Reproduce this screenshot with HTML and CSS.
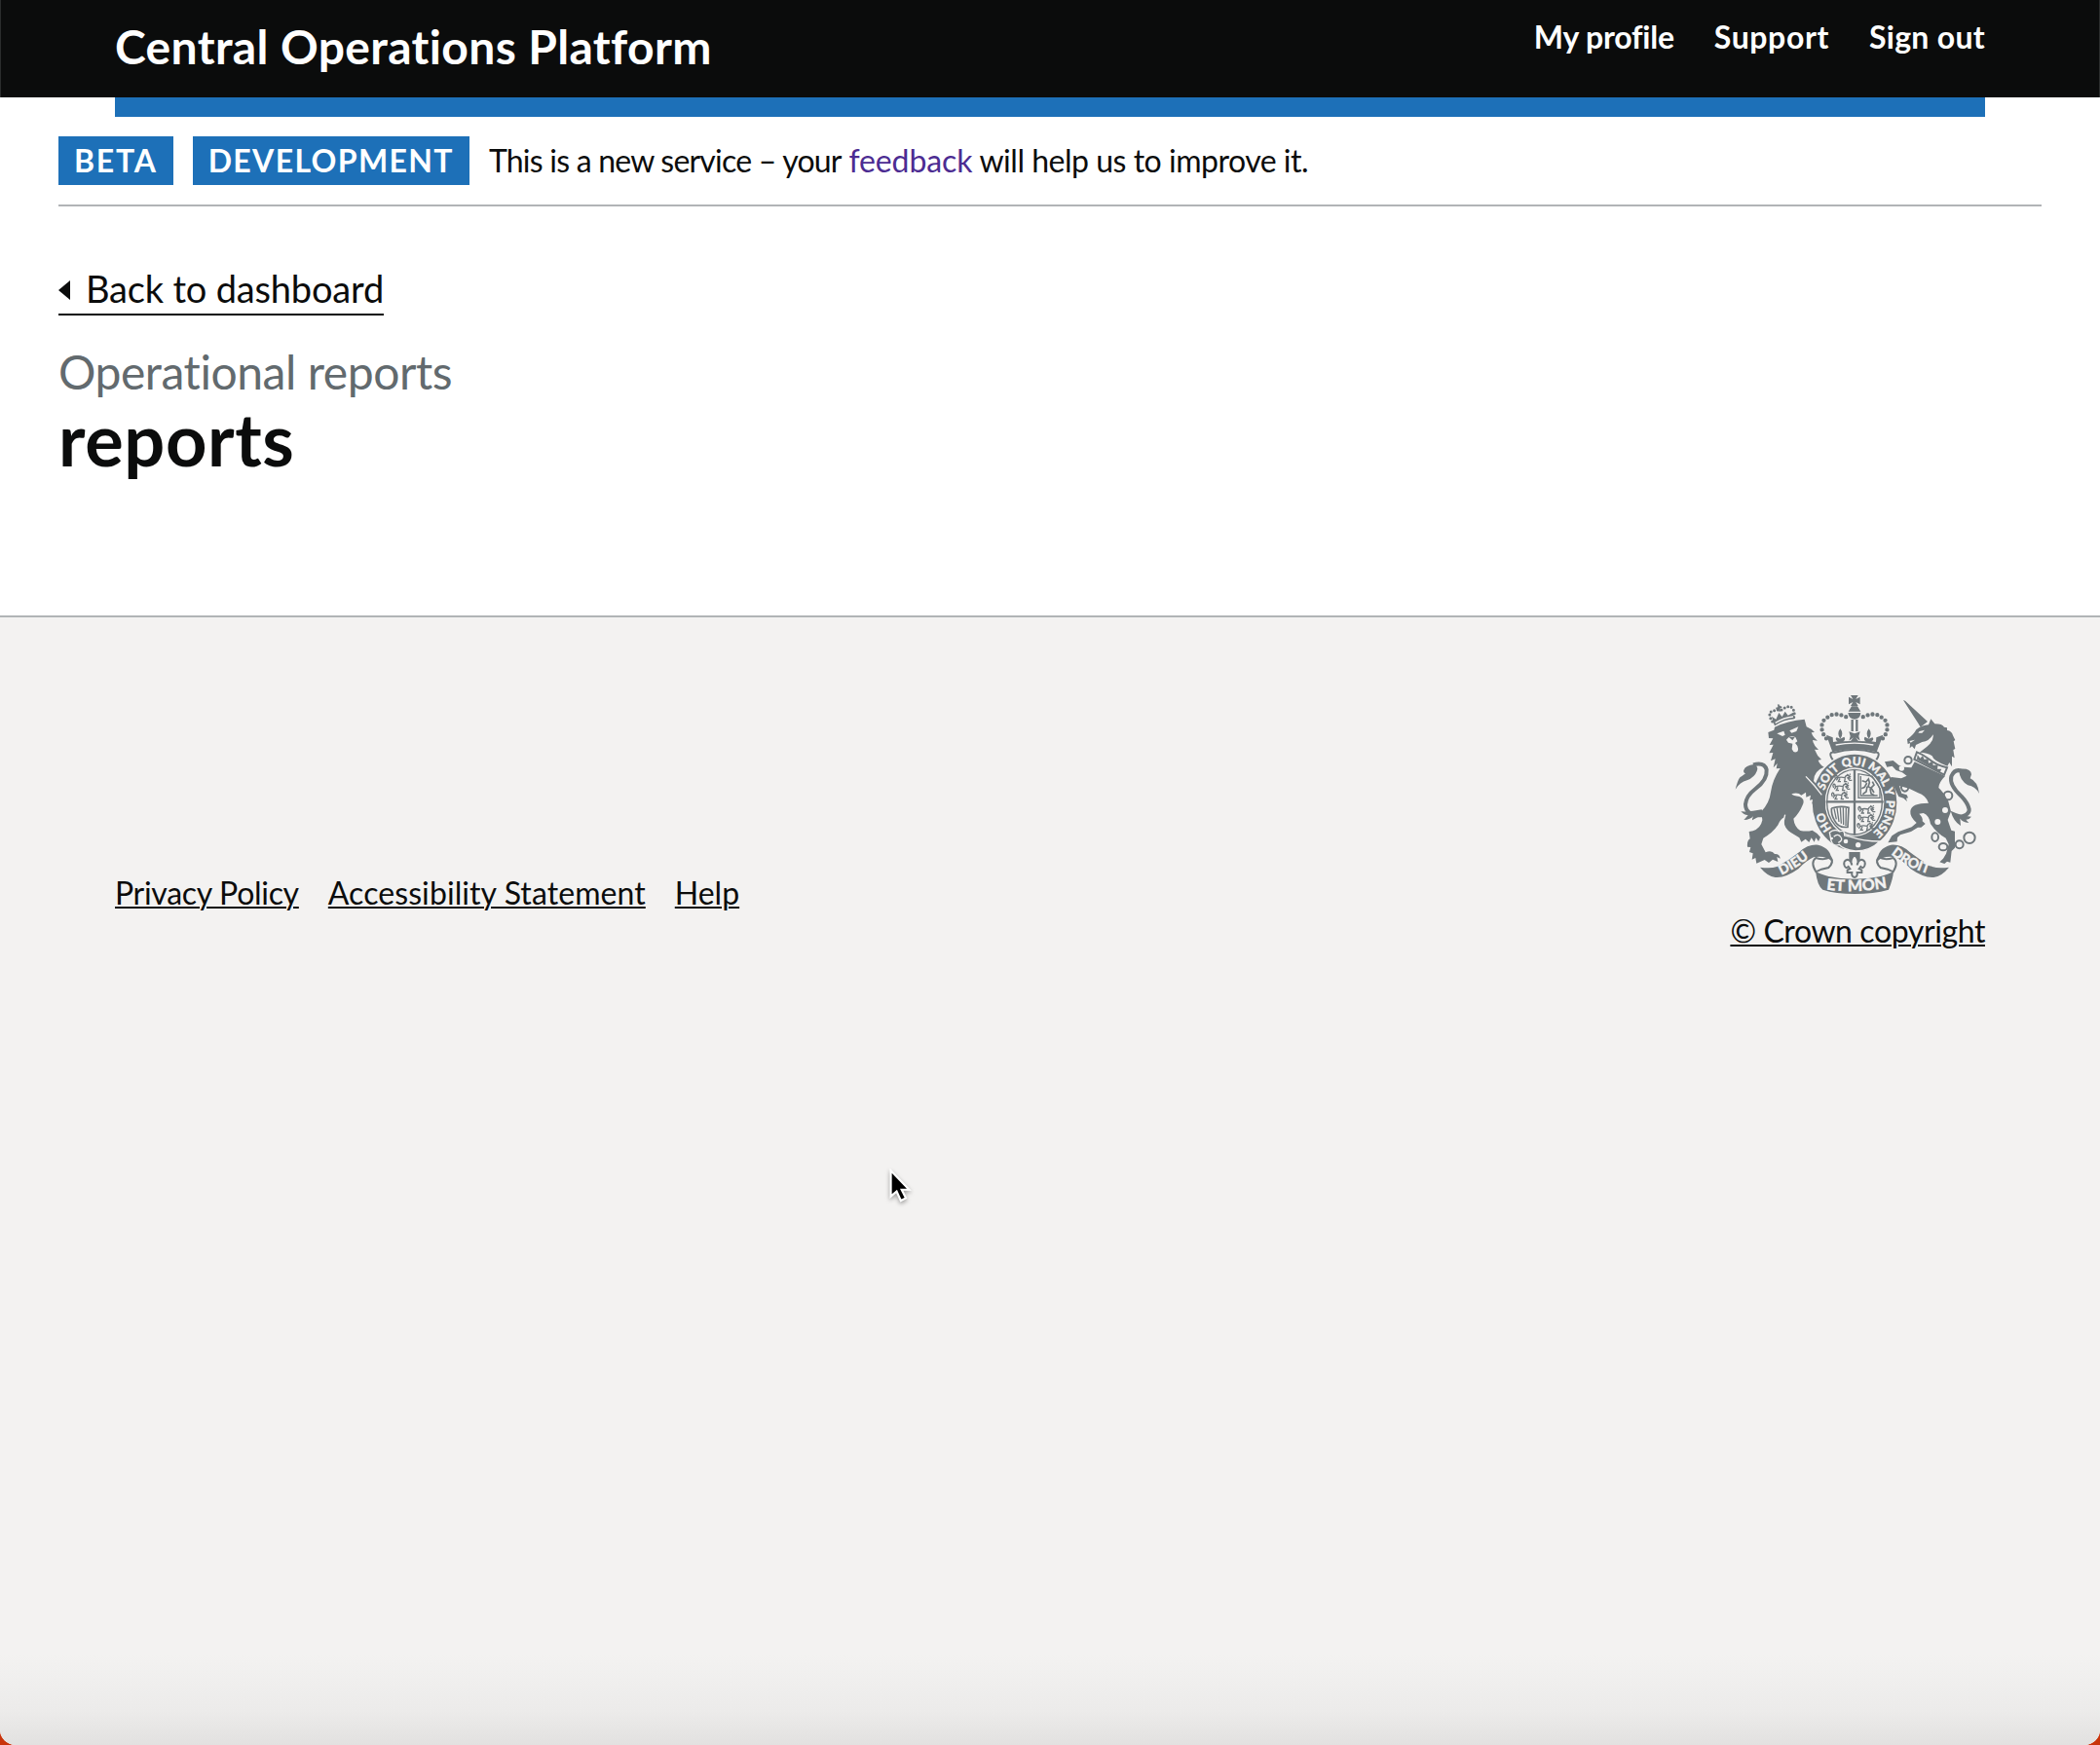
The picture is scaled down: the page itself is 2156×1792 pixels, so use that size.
FILE: index.html
```html
<!DOCTYPE html>
<html lang="en">
<head>
<meta charset="utf-8">
<title>Operational reports - Central Operations Platform</title>
<link rel="stylesheet" href="styles.css">
</head>
<body>
<div class="page">
  <header class="header">
    <div class="header-inner">
      <a class="service-name" href="#">Central Operations Platform</a>
      <nav class="nav">
        <a class="nav-profile" href="#">My profile</a>
        <a class="nav-support" href="#">Support</a>
        <a href="#">Sign out</a>
      </nav>
    </div>
  </header>
  <div class="header-bar"></div>

  <main class="main">
    <div class="phase-banner">
      <strong class="tag">BETA</strong>
      <strong class="tag tag-env">DEVELOPMENT</strong>
      <span class="phase-text"><span class="tight">This is a new service – your</span> <a href="#">feedback</a> <span>will help us to improve it.</span></span>
    </div>
    <a class="back-link" href="#">Back to dashboard</a>
    <span class="caption">Operational reports</span>
    <h1 class="title">reports</h1>
  </main>

  <footer class="footer">
    <div class="footer-inner">
      <ul class="footer-links">
        <li><a class="privacy" href="#">Privacy Policy</a></li>
        <li><a class="accessibility" href="#">Accessibility Statement</a></li>
        <li><a href="#">Help</a></li>
      </ul>
      <div class="footer-meta">
        <svg class="crest" viewBox="60 36 760 624" role="img" aria-label="Royal coat of arms">
          <defs>
            <path id="ring" d="M432 486A98 114 0 0 1 432 258A98 114 0 0 1 432 486"/>
            <path id="motto-left" d="M207 596Q262 570 310 528"/>
            <path id="motto-mid" d="M345 640Q432 652 528 636"/>
            <path id="motto-right" d="M544 531Q594 574 672 596"/>
            <g id="passant" class="thin">
              <path d="M2 16q-5-9 1-12q5 2 3 8M6 14q10-6 24-2q3-8 10-8l6 4l-6 3l8 3M38 12l7 8h7M31 14l-2 10h8M15 14l-5 10h8M8 14l-4 6M40 4l-3-3M45 3l2-3"/>
            </g>
          </defs>

          <!-- central crown -->
          <path class="f" d="M420 42h23l-7 12l13-7v23l-13-7l7 12h-23l7-12l-13 7v-23l13 7z"/>
          <path class="f" d="M423 76h18l10 16h-38zM412 96h39q-1 18-19 20q-18-2-20-20z"/>
          <path class="s7" d="M425 117v36M439 117v36"/>
          <path class="beads" d="M345 175C322 147 330 119 349 110Q368 94 396 105L416 112M519 175C542 147 534 119 515 110Q496 94 468 105L448 112"/>
          <path class="f" d="M345 164L365 172L366 186L380 184Q370 178 377 172L388 176Q376 160 388 145Q400 160 388 176L400 170Q406 178 397 184L420 183L429 172L415 182L419 168L415 154L432 160L449 154L445 168L449 182L435 172L444 183L467 184Q458 178 464 170L476 176Q464 160 476 145Q488 160 476 176L487 172Q494 178 484 184L498 186L499 172L520 164L500 217Q432 198 364 217Z"/>
          <path class="l" d="M374 195Q432 184 490 195"/>
          <path class="paper" d="M365 241Q348 214 371 218Q432 200 493 218Q516 214 499 241"/>

          <!-- garter and shield -->
          <ellipse class="f" cx="432" cy="372" rx="130" ry="148"/>
          <ellipse class="w" cx="432" cy="371" rx="91" ry="106"/>
          <ellipse class="s4" cx="432" cy="371" rx="85" ry="100"/>
          <path class="s7" d="M432 270v203M344 370h177"/>
          <g class="ring-text">
            <text><textPath href="#ring" startOffset="12%">HO</textPath></text>
            <text><textPath href="#ring" startOffset="30.5%">SOIT</textPath></text>
            <text><textPath href="#ring" startOffset="44.5%">QUI</textPath></text>
            <text><textPath href="#ring" startOffset="56%">MAL</textPath></text>
            <text><textPath href="#ring" startOffset="68.6%">Y</textPath></text>
            <text><textPath href="#ring" startOffset="74%">PENSE</textPath></text>
          </g>
          <use href="#passant" x="372" y="284"/>
          <use href="#passant" x="366" y="311"/>
          <use href="#passant" x="362" y="338"/>
          <use href="#passant" x="444" y="381"/>
          <use href="#passant" x="444" y="407"/>
          <use href="#passant" x="441" y="433"/>
          <path class="s4" d="M444 284v74h66v-30l-24-37zM451 291v60h52"/>
          <path class="s5" d="M455 305l12 4l8-9l3 11l-4 12l10 6l8 13M470 312l-7 13l-9 4M471 323l-3 16l-11 8M482 328l10-10l-5-10M480 330l3 15l10 5"/>
          <path class="s5" d="M361 390Q388 381 414 388L411 448Q382 452 370 427Q360 411 361 390"/>
          <path class="thin" d="M369 391L376 424M378 389L384 432M388 388L391 437M397 388L398 441M406 389L405 445"/>

          <!-- buckle -->
          <path class="f o" d="M355 465Q370 452 386 462Q402 455 401 474L420 478Q460 492 510 492Q480 522 435 522Q395 516 385 502Q366 510 360 490Z"/>
          <path class="l" d="M368 478Q380 466 389 478Q398 488 382 496"/>
          <circle class="w" cx="405" cy="492" r="7"/><circle class="w" cx="443" cy="503" r="8"/><circle class="w" cx="362" cy="483" r="4"/>

          <!-- lion -->
          <path class="s13" d="M150 412Q96 414 96 378Q98 352 127 330Q164 302 161 271Q154 247 120 256"/>
          <path class="f" d="M65 332Q72 304 78 296Q81 294 96 283Q88 279 91 272Q96 258 122 255Q138 262 131 276Q124 295 101 304Q79 309 65 332ZM146 394Q112 402 82 400Q92 412 104 411Q97 420 91 426Q112 425 120 414Q116 424 117 427Q136 418 150 405Z"/>
          <path class="f" d="M166 156L184 149L186 140Q225 120 278 116L284 139Q299 145 309 156L299 157Q304 172 318 182L303 180Q306 198 321 210L309 209Q316 228 330 240L320 242Q325 256 338 263Q306 275 306 306L330 334Q345 352 342 390L335 386L332 399L324 389L315 398L312 384L301 375L306 362L294 365L297 350L283 356L282 341L268 350Q258 340 238 346Q243 353 262 354Q281 362 272 380Q262 405 244 422Q247 448 265 459Q285 463 302 458Q316 465 327 479L321 492L313 481L308 494L299 481L292 495L281 485L268 494L262 481L236 465Q210 448 216 418Q204 422 196 442Q180 466 151 482L145 501L158 526Q177 518 186 531Q202 530 203 545L193 540L196 555L180 548L168 558L155 549L130 560L127 543L116 548L119 529L108 525L112 510L102 509Q100 490 110 484L107 462L119 460Q143 452 148 427L145 400Q170 374 174 340Q179 303 203 267L191 268L194 252L182 265L188 238L174 244L181 219L169 220L182 194L170 195L181 175L168 174Z"/>
          <path class="w" d="M193 160L214 152L218 164L210 168ZM232 151L259 139L253 153L238 158ZM222 179Q233 164 250 171L256 184L249 189Q263 203 256 215Q245 222 239 208L241 191L228 188Z"/>
          <path class="f" d="M230 171h18l-7 10z"/>
          <path class="l" d="M282 292L309 321L331 349M210 445L218 410"/>
          <path class="f" d="M182 127L177 107L190 116L199 96L209 108L218 92L227 104L243 95L247 115Q214 117 186 136Z"/>
          <path class="minibeads" d="M179 123Q160 93 184 89L197 87L201 78L207 87Q234 68 243 85Q250 101 244 112"/>
          <path class="s5" d="M197 70l5 22M190 83l18-5"/>
          <path class="l" d="M188 127Q214 111 243 108"/>

          <!-- unicorn -->
          <path class="s13" d="M744 417Q787 415 785 393Q781 374 761 353Q723 319 730 292Q740 268 761 275"/>
          <path class="f" d="M756 269Q791 266 792 286L788 298Q812 308 816 345Q804 322 781 319Q756 304 754 276ZM728 398Q760 413 792 416Q784 426 775 425L784 435Q763 434 757 421L759 444Q737 431 728 398Z"/>
          <path class="f" d="M582 57L588 59L657 123L635 140L628 128Z"/>
          <path class="f" d="M594 178Q614 164 622 148Q638 134 660 133L667 115L679 130Q703 130 708 140L717 142L717 150Q732 152 735 166L742 180L737 184L742 207L736 210L740 235L732 230V262L724 249L718 260Q675 245 671 229Q657 218 632 218L655 200Q677 183 674 163Q662 184 640 186L621 195L617 208L609 199L602 205L603 190L596 192Z"/>
          <path class="w" d="M632 153l16-4l-8 9h-12zM601 183l17-4l-13 9z"/>
          <path class="f" d="M617 247L711 291Q691 311 691 327Q706 340 721 369L729 400L719 426L730 458L741 461V512L731 522L727 557L717 554L709 561L694 556L705 545L714 530L722 501L713 482Q686 468 666 438Q662 412 644 405L631 407Q644 420 641 430L650 438L637 449L627 449L606 462L573 472L564 480L563 493L535 496L547 475L566 463L608 448L623 435Q602 416 604 399Q606 374 660 374Q651 350 628 343L600 329L570 321L577 344L593 349L597 358L591 359L594 369L583 359L568 354L561 340L552 320L535 310L545 294L576 298L593 290L579 280L560 273L548 260L532 263L525 247L551 243L568 257L584 263L607 265Z"/>
          <path class="paper" d="M624 217L616 239L708 287L717 265Q682 257 660 238Q643 224 624 217Z"/>
          <path class="f" d="M624 239L626 225L634 236L642 228L647 240L659 237L660 251L673 245L674 258L689 256L687 269L700 269L695 279Z"/>
          <g class="chain">
            <circle cx="597" cy="242" r="11"/><ellipse cx="587" cy="325" rx="11" ry="13"/><circle cx="720" cy="351" r="13"/>
            <ellipse cx="680" cy="479" rx="10" ry="13"/><ellipse cx="705" cy="509" rx="13" ry="11"/><circle cx="755" cy="502" r="12"/><circle cx="786" cy="481" r="17"/>
          </g>
          <circle class="w" cx="577" cy="267" r="8"/><circle class="w" cx="711" cy="396" r="9"/><circle class="w" cx="688" cy="432" r="9"/>

          <!-- motto ribbon -->
          <path class="paper" d="M313 586Q295 556 313 543Q340 552 358 540Q370 556 352 573L330 578ZM551 586Q569 556 551 543Q524 552 506 540Q494 556 512 573L534 578Z"/>
          <path class="f" d="M141 572Q173 577 193 570Q228 552 262 525Q289 500 320 503Q362 514 361 553Q343 535 306 541Q282 552 259 577Q218 606 188 603Q164 600 141 572ZM723 572Q691 577 671 570Q636 552 602 525Q575 500 544 503Q502 514 503 553Q521 535 558 541Q582 552 605 577Q646 606 676 603Q700 600 723 572Z"/>
          <path class="f" d="M312 584Q326 593 352 600Q432 617 512 600Q538 593 552 584Q551 606 537 641Q490 654 432 654Q374 654 334 641Q317 628 312 584Z"/>
          <g class="motto-text">
            <text><textPath href="#motto-left">DIEU</textPath></text>
            <text class="big"><textPath href="#motto-mid">ET MON</textPath></text>
            <text><textPath href="#motto-right">DROIT</textPath></text>
          </g>
          <path class="f" d="M415 525h34v35h-34z"/>
          <path class="paper" d="M432 534Q415 550 424 565Q422 550 410 548Q396 552 401 567Q405 577 413 570L418 577L410 580V588H424Q422 602 432 603Q442 602 440 588H454V580L446 577L451 570Q459 577 463 567Q468 552 454 548Q442 550 440 565Q449 550 432 534Z"/>
        </svg>
        <a class="copyright" href="#">© Crown copyright</a>
      </div>
    </div>
  </footer>
  <svg class="cursor" viewBox="0 0 28 42" aria-hidden="true"><path d="M3 3V34L10 28L15 39L21 36L16 26H25Z"/></svg>
</div>
</body>
</html>
```
FILE: styles.css
```css
* { box-sizing: border-box; }

html { background: #c9340b; }

body {
  margin: 0;
  font-family: Lato, "Noto Sans", sans-serif;
  font-size: 32px;
  line-height: 40px;
  color: #0b0c0c;
}

a { color: inherit; }

.page {
  position: relative;
  display: flex;
  flex-direction: column;
  height: 1792px;
  overflow: hidden;
  background: #fff;
  border-radius: 0 0 16px 16px;
}

.header {
  height: 100px;
  padding: 18px 117px 0;
  background: #0b0c0c;
  border: solid #2b2d2d;
  border-width: 0 1px;
  color: #fff;
  font-weight: 700;
}

.header-inner {
  display: flex;
  justify-content: space-between;
  align-items: flex-start;
}

.header a { text-decoration: none; }

.service-name {
  font-size: 48px;
  line-height: 60px;
  letter-spacing: 0.36px;
}

.nav {
  display: flex;
  gap: 41px;
  letter-spacing: 0.3px;
}

.nav-profile { letter-spacing: -0.2px; }
.nav-support { letter-spacing: 0.6px; }

.header-bar {
  height: 20px;
  margin: 0 118px;
  background: #1d70b8;
}

.main {
  display: flex;
  flex-direction: column;
  align-items: flex-start;
  height: 512px;
  padding: 0 60px;
}

.phase-banner {
  display: flex;
  gap: 20px;
  width: 100%;
  height: 92px;
  padding: 20px 0;
  border-bottom: 2px solid #b1b4b6;
  line-height: 49px;
}

.tag {
  height: 50px;
  padding: 0 16px;
  background: #1d70b8;
  color: #fff;
  letter-spacing: 1.75px;
}

.tag-env { letter-spacing: 1.36px; }

.phase-text { letter-spacing: -0.48px; }
.phase-text .tight { letter-spacing: -0.78px; }

.phase-text a {
  color: #4c2c92;
  letter-spacing: -0.1px;
  text-decoration: none;
}

.back-link {
  display: flex;
  align-items: center;
  gap: 16px;
  margin-top: 61px;
  padding-bottom: 3px;
  border-bottom: 2px solid #0b0c0c;
  font-size: 38px;
  line-height: 46px;
  letter-spacing: -0.18px;
  text-decoration: none;
}

.back-link::before {
  content: "";
  width: 12px;
  height: 20px;
  margin-top: 4px;
  background: #0b0c0c;
  clip-path: polygon(0 50%, 100% 0, 100% 100%);
}

.caption {
  margin-top: 29px;
  color: #626a6e;
  font-size: 48px;
  line-height: 58px;
  letter-spacing: -0.44px;
}

.title {
  margin: 0;
  font-size: 74px;
  line-height: 80px;
  letter-spacing: 0.6px;
}

.footer {
  flex: 1;
  padding: 78px 118px 0;
  border-top: 2px solid #b1b4b6;
  background: linear-gradient(#f3f2f1 92%, #ecebea 97%, #e2e1e0);
}

.footer-inner {
  display: flex;
  justify-content: space-between;
  align-items: flex-end;
}

.footer a {
  text-decoration-thickness: 2px;
  text-underline-offset: 2px;
}

.footer-links {
  display: flex;
  gap: 30px;
  margin: 0 0 39px;
  padding: 0;
  list-style: none;
}

.privacy { letter-spacing: -0.3px; }
.accessibility { letter-spacing: 0.08px; }

.footer-meta {
  display: flex;
  flex-direction: column;
  align-items: flex-end;
}

.copyright {
  margin-top: 16px;
  letter-spacing: -0.4px;
}

.crest {
  width: 253.33px;
  height: 208px;
  margin-right: 4.67px;
  fill: none;
}

.f { fill: #6f777b; }
.w { fill: #f3f2f1; }
.o { stroke: #f3f2f1; stroke-width: 4; }
.l { stroke: #f3f2f1; stroke-width: 4; }
.paper { fill: #f3f2f1; stroke: #6f777b; stroke-width: 6; }
.thin { stroke: #6f777b; stroke-width: 4; }
.s4 { stroke: #6f777b; stroke-width: 4; }
.s5 { stroke: #6f777b; stroke-width: 5; }
.s7 { stroke: #6f777b; stroke-width: 7; }
.s13 { stroke: #6f777b; stroke-width: 12; }
.chain { stroke: #6f777b; stroke-width: 6; }

.beads {
  stroke: #6f777b;
  stroke-width: 13;
  stroke-linecap: round;
  stroke-dasharray: 0 15;
}

.minibeads {
  stroke: #6f777b;
  stroke-width: 9;
  stroke-linecap: round;
  stroke-dasharray: 0 11;
}

.ring-text,
.motto-text {
  fill: #f3f2f1;
  stroke: #f3f2f1;
  stroke-width: 1;
  font-family: Lato, sans-serif;
  font-weight: 900;
}

.ring-text { font-size: 36px; }
.motto-text { font-size: 42px; }
.motto-text .big { font-size: 48px; }

.cursor {
  position: absolute;
  left: 912px;
  top: 1199px;
  width: 24px;
  height: 37px;
  overflow: visible;
  fill: #000;
  stroke: #fff;
  stroke-width: 2.5;
  filter: drop-shadow(0 2px 2px rgba(0, 0, 0, 0.35));
}
```
